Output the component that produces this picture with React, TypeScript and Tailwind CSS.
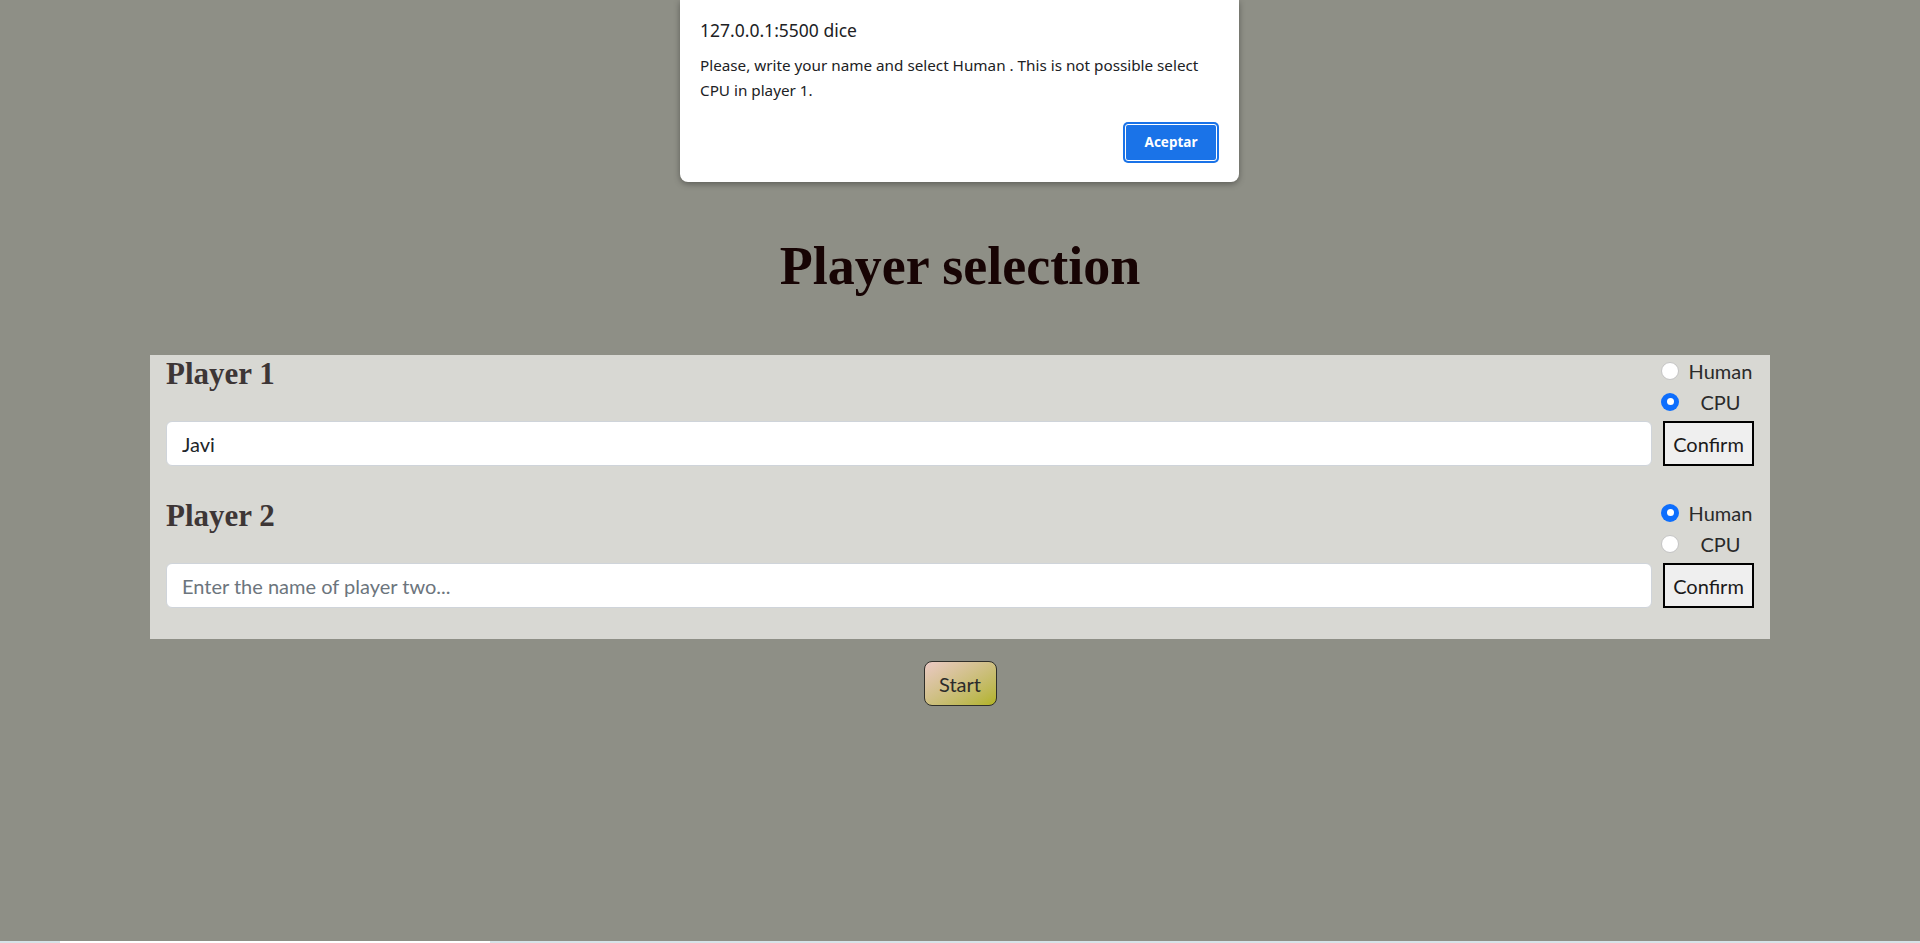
import React from 'react';

const uiFont = { fontFamily: 'Lato, "Noto Sans", sans-serif' };
const serif = { fontFamily: '"Liberation Serif", "DejaVu Serif", serif' };
const dialogFont = { fontFamily: '"Noto Sans", "Open Sans", sans-serif' };

export default function App() {
  return (
    <div className="relative flex h-[943px] w-full flex-col overflow-hidden bg-[#8e8f86]" style={uiFont}>
      <main className="flex flex-1 flex-col items-center pt-[239px]">
        <h1 className="text-[54px] font-bold leading-none text-[#170404]" style={serif}>
          Player selection
        </h1>

        <section className="mt-[62px] flex w-[1620px] flex-col gap-[31px] bg-[#d8d8d3] px-4 pb-[31px]">
          <PlayerBlock title="Player 1" value="Javi" placeholder="Enter the name of player one..." cpu />
          <PlayerBlock title="Player 2" value="" placeholder="Enter the name of player two..." />
        </section>

        <button
          className="mt-[22px] h-[45px] w-[73px] rounded-[8px] border border-[#2f2f2a] bg-gradient-to-br from-[#ebc9c4] to-[#b2b31c] text-[20px] text-[#2b2b2b]"
        >
          Start
        </button>
      </main>

      <div className="flex h-[2px] w-full bg-[#d6e4e9]">
        <div className="ml-[60px] w-[430px] bg-white" />
      </div>

      <AlertDialog />
    </div>
  );
}

function PlayerBlock({ title, value, placeholder, cpu }: { title: string; value: string; placeholder: string; cpu?: boolean }) {
  return (
    <div className="flex flex-col gap-1">
      <div className="flex items-start justify-between">
        <h2 className="pt-[3px] text-[31px] font-bold leading-none text-[#3d3636]" style={serif}>
          {title}
        </h2>
        <div className="flex w-[93px] flex-col">
          <Radio label="Human" checked={!cpu} />
          <Radio label="CPU" checked={!!cpu} />
        </div>
      </div>
      <div className="flex items-center gap-[11px]">
        <input
          readOnly
          value={value}
          placeholder={placeholder}
          className="h-[45px] flex-1 rounded-[6px] border border-[#cfd4da] bg-white px-[15px] text-[20px] text-[#212529] placeholder:text-[#6c757d] outline-none"
        />
        <button className="h-[45px] w-[91px] border-2 border-black bg-[#efefef] text-[20px] text-[#1a1a1a]">
          Confirm
        </button>
      </div>
    </div>
  );
}

function Radio({ label, checked }: { label: string; checked: boolean }) {
  return (
    <div className="flex h-[31px] items-center">
      {checked ? (
        <span className="flex h-[18px] w-[18px] items-center justify-center rounded-full bg-[#0d6efd]">
          <span className="h-[7px] w-[7px] rounded-full bg-white" />
        </span>
      ) : (
        <span className="h-[18px] w-[18px] rounded-full border border-[#c4c4c4] bg-white" />
      )}
      <span className="ml-2 flex-1 text-center text-[20px] leading-none text-[#2a2a2a]">{label}</span>
    </div>
  );
}

function AlertDialog() {
  return (
    <div
      className="absolute left-[680px] top-0 flex h-[182px] w-[559px] flex-col rounded-b-[8px] bg-white px-5 pt-[18px] shadow-[0_2px_6px_rgba(0,0,0,0.35)]"
      style={dialogFont}
    >
      <p className="text-[17.5px] leading-[24px] text-[#202124]">127.0.0.1:5500 dice</p>
      <p className="mt-[11px] text-[15.25px] leading-[25px] text-[#202124]">
        Please, write your name and select Human . This is not possible select CPU in player 1.
      </p>
      <div className="mt-auto mb-[19px] flex justify-end">
        <button className="flex h-[41px] w-[96px] items-center justify-center rounded-[5px] bg-[#1a73e8] p-[2px]">
          <span className="flex h-full w-full items-center justify-center rounded-[3px] border border-white text-[13.5px] font-bold text-white">
            Aceptar
          </span>
        </button>
      </div>
    </div>
  );
}
